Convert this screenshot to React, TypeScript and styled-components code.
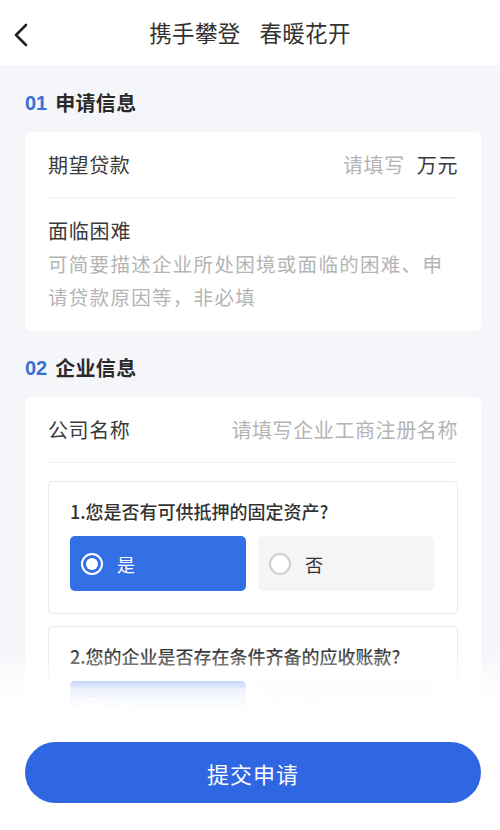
import { useState } from "react";
import styled, { createGlobalStyle } from "styled-components";

const GlobalStyle = createGlobalStyle`
  * { box-sizing: border-box; }
  body {
    margin: 0;
    font-family: "Noto Sans CJK SC", "Noto Sans", sans-serif;
    background: #f5f6fa;
  }
`;

const Page = styled.div`
  position: relative;
  width: 500px;
  height: 830px;
  overflow: hidden;
  background: #f5f6fa;
  display: flex;
  flex-direction: column;
`;

const Header = styled.div`
  height: 65px;
  flex-shrink: 0;
  background: #fff;
  display: flex;
  align-items: center;
  justify-content: center;
  position: relative;
`;

const BackBtn = styled.div`
  position: absolute;
  left: 12px;
  top: 23px;
  width: 20px;
  height: 24px;
  display: flex;
`;

const HeaderTitle = styled.div`
  font-size: 22.5px;
  color: #333;
  display: flex;
  gap: 19px;
  margin-top: -1px;
  letter-spacing: 0.3px;
`;

const Content = styled.div`
  padding: 0 19px 0 25px;
`;

const SectionTitle = styled.div<{ $top: number }>`
  padding-top: ${(p) => p.$top}px;
  height: ${(p) => p.$top + 24 + 17}px;
  display: flex;
  align-items: flex-start;
  font-size: 20px;
  line-height: 24px;
  font-weight: 700;
  color: #2a2a2a;
  letter-spacing: 0.3px;

  span {
    color: #3a6fd8;
    font-family: "Liberation Sans", sans-serif;
    font-weight: 600;
    margin-right: 8px;
    letter-spacing: 0;
  }
`;

const Card = styled.div`
  background: #fff;
  border-radius: 6px;
  padding: 0 23px;
`;

const Row = styled.div`
  height: 66px;
  display: flex;
  align-items: center;
  justify-content: space-between;
  border-bottom: 1px solid #efefef;
  font-size: 20px;
  letter-spacing: 0.6px;
`;

const Label = styled.div`
  color: #3a3a3a;
`;

const Placeholder = styled.span`
  color: #b4b4b4;
`;

const Unit = styled.span`
  color: #3a3a3a;
  margin-left: 12px;
`;

const Block = styled.div`
  padding: 16px 0 18px;
  font-size: 20px;
  line-height: 33px;
  letter-spacing: 0.8px;
`;

const Desc = styled.div`
  color: #b4b4b4;
  font-size: 19.5px;
  letter-spacing: 1.3px;
`;

const Question = styled.div`
  border: 1px solid #ebebeb;
  border-radius: 4px;
  padding: 16px 23px 22px 21px;
  margin-top: 18px;
  & + & {
    margin-top: 12px;
  }
`;

const QText = styled.div`
  font-size: 18px;
  line-height: 26px;
  font-weight: 500;
  color: #333;
  margin-bottom: 12px;
`;

const Options = styled.div`
  display: grid;
  grid-template-columns: 1fr 1fr;
  gap: 12px;
`;

const Option = styled.div<{ $active: boolean }>`
  height: 55px;
  border-radius: 5px;
  display: flex;
  align-items: center;
  padding-left: 11px;
  gap: 14px;
  font-size: 18px;
  background: ${(p) => (p.$active ? "#3370e6" : "#f5f5f5")};
  color: ${(p) => (p.$active ? "#fff" : "#333")};
  cursor: pointer;
`;

const Radio = styled.div<{ $active: boolean }>`
  width: 22px;
  height: 22px;
  border-radius: 50%;
  border: 2px solid ${(p) => (p.$active ? "#fff" : "#cfcfcf")};
  background: ${(p) => (p.$active ? "transparent" : "#fff")};
  display: flex;
  align-items: center;
  justify-content: center;
  &::after {
    content: "";
    display: ${(p) => (p.$active ? "block" : "none")};
    width: 12px;
    height: 12px;
    border-radius: 50%;
    background: #fff;
  }
`;

const Footer = styled.div`
  position: absolute;
  left: 0;
  right: 0;
  bottom: 0;
  height: 180px;
  background: linear-gradient(
    rgba(255, 255, 255, 0) 0px,
    rgba(255, 255, 255, 0.92) 40px,
    #fff 60px
  );
  display: flex;
  align-items: flex-end;
  padding: 0 19px 27px 25px;
`;

const SubmitBtn = styled.button`
  width: 100%;
  height: 61px;
  border: 0;
  border-radius: 31px;
  background: #2f67e3;
  color: #fff;
  font-family: "Noto Sans CJK SC", sans-serif;
  font-size: 22px;
  letter-spacing: 1px;
  cursor: pointer;
`;

const questions = [
  "1.您是否有可供抵押的固定资产?",
  "2.您的企业是否存在条件齐备的应收账款?",
];

export default function App() {
  const [answers, setAnswers] = useState<boolean[]>([true, true]);

  return (
    <Page>
      <GlobalStyle />
      <Header>
        <BackBtn>
          <svg width="20" height="24" viewBox="0 0 20 24">
            <polyline
              points="14,2 4,12 14,22"
              fill="none"
              stroke="#222"
              strokeWidth="2.6"
              strokeLinecap="round"
              strokeLinejoin="round"
            />
          </svg>
        </BackBtn>
        <HeaderTitle>
          <span>携手攀登</span>
          <span>春暖花开</span>
        </HeaderTitle>
      </Header>
      <Content>
        <SectionTitle $top={26}>
          <span>01</span>申请信息
        </SectionTitle>
        <Card>
          <Row>
            <Label>期望贷款</Label>
            <div>
              <Placeholder>请填写</Placeholder>
              <Unit>万元</Unit>
            </div>
          </Row>
          <Block>
            <Label>面临困难</Label>
            <Desc>可简要描述企业所处困境或面临的困难、申请贷款原因等，非必填</Desc>
          </Block>
        </Card>
        <SectionTitle $top={25}>
          <span>02</span>企业信息
        </SectionTitle>
        <Card>
          <Row>
            <Label>公司名称</Label>
            <Placeholder>请填写企业工商注册名称</Placeholder>
          </Row>
          {questions.map((q, i) => (
            <Question key={q}>
              <QText>{q}</QText>
              <Options>
                {[true, false].map((v) => (
                  <Option
                    key={String(v)}
                    $active={answers[i] === v}
                    onClick={() =>
                      setAnswers((a) => a.map((x, j) => (j === i ? v : x)))
                    }
                  >
                    <Radio $active={answers[i] === v} />
                    {v ? "是" : "否"}
                  </Option>
                ))}
              </Options>
            </Question>
          ))}
        </Card>
      </Content>
      <Footer>
        <SubmitBtn>提交申请</SubmitBtn>
      </Footer>
    </Page>
  );
}
